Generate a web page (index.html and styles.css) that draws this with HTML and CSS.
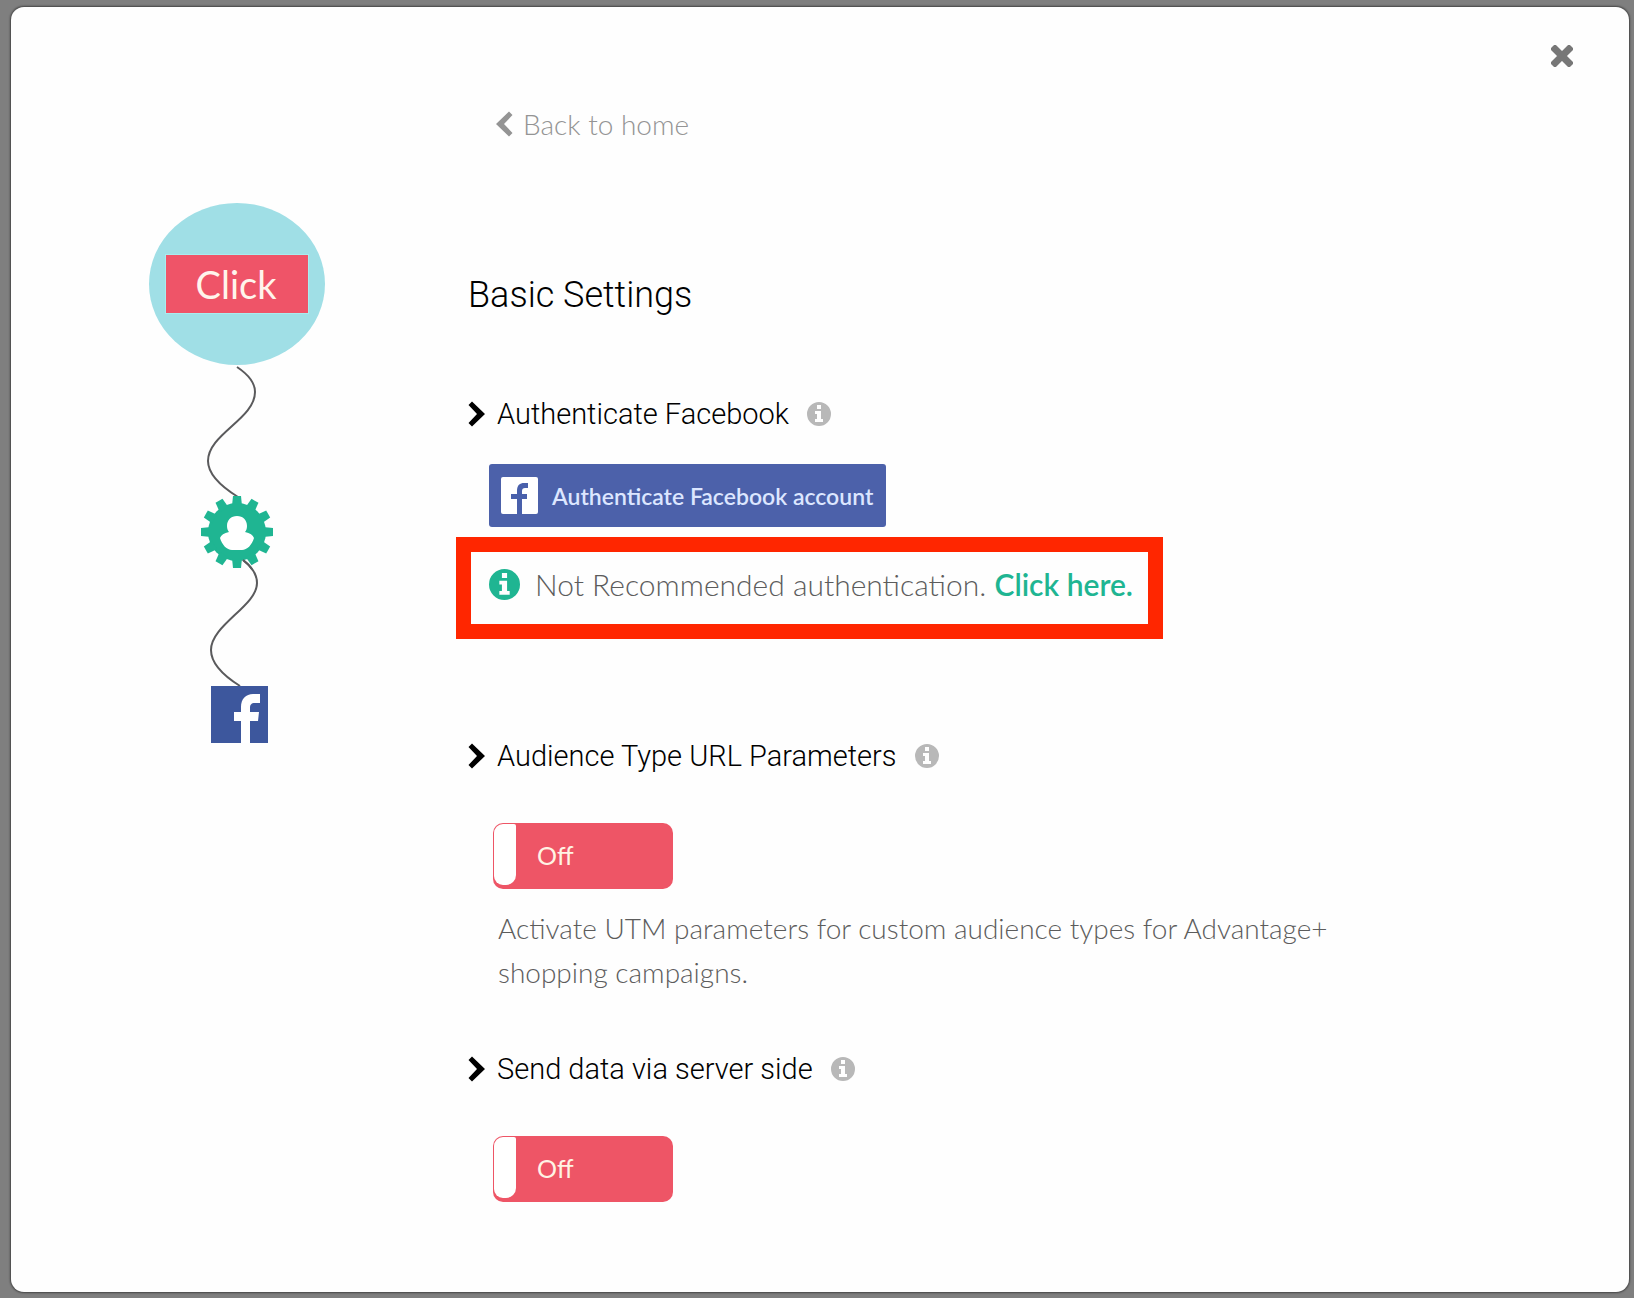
FILE: index.html
```html
<!DOCTYPE html>
<html lang="en">
<head>
<meta charset="utf-8">
<meta name="viewport" content="width=device-width, initial-scale=1">
<title>Basic Settings</title>
<link rel="stylesheet" href="styles.css">
</head>
<body>
<svg class="sprite" aria-hidden="true">
  <symbol id="chevron" viewBox="0 0 17 26"><path d="M4 0.500L0.500 4L9 13L0.500 22L4 25.500L17 13Z"/></symbol>
  <symbol id="info" viewBox="0 0 24 24"><path fill-rule="evenodd" d="M12 0a12 12 0 1 0 0 24a12 12 0 1 0 0-24zM10 3h4v4h-4zM8 9h6v8h2v3H8v-3h2v-5H8z"/></symbol>
</svg>
<main class="modal" role="dialog" aria-labelledby="title">
  <header class="modal-header">
    <button class="close" type="button" aria-label="Close">
      <svg width="22" height="22" viewBox="0 0 22 22"><path d="M4 4L18 18M18 4L4 18" stroke="currentColor" stroke-width="7" stroke-linecap="square" stroke-linejoin="round"/></svg>
    </button>
  </header>
  <div class="modal-body">
    <svg class="flow" width="180" height="545" viewBox="147 203 180 545" role="img" aria-label="Click flow">
      <ellipse cx="237" cy="284" rx="88" ry="81" fill="#a0dfe6"/>
      <rect x="165.500" y="254.500" width="143" height="59" fill="#ef5468" stroke="#a9ecef"/>
      <text class="flow-text" x="236" y="299" text-anchor="middle">Click</text>
      <g fill="none" stroke="#5a5a5c" stroke-width="2">
        <path d="M237 367C249 375 255 383 255 392C255 419 208 434 208 461C208 475 222 487 238 497"/>
        <path d="M243 560C252 567 257 574 257 583C257 606 211 625 211 650C211 664 224 676 240 686"/>
      </g>
      <g transform="translate(237 532)" fill="#1fb592">
        <circle r="29"/>
        <g id="teeth">
          <path id="tooth" d="M-5 -26L-4 -36H4L5 -26Z"/>
          <use href="#tooth" transform="rotate(30)"/><use href="#tooth" transform="rotate(60)"/>
          <use href="#tooth" transform="rotate(90)"/><use href="#tooth" transform="rotate(120)"/>
          <use href="#tooth" transform="rotate(150)"/><use href="#tooth" transform="rotate(180)"/>
          <use href="#tooth" transform="rotate(210)"/><use href="#tooth" transform="rotate(240)"/>
          <use href="#tooth" transform="rotate(270)"/><use href="#tooth" transform="rotate(300)"/>
          <use href="#tooth" transform="rotate(330)"/>
        </g>
        <path fill="#fff" d="M0 -16C6 -16 10 -12 10 -6C10 -3 9 -1 8 0C13 1 16 3 17 6C15 13 10 18 5 18H-5C-10 18 -15 13 -17 6C-16 3 -13 1 -8 0C-9 -1 -10 -3 -10 -6C-10 -12 -6 -16 0 -16Z"/>
      </g>
      <path stroke="#5a5a5c" stroke-width="2" fill="none" d="M243 560C247 563 250 566 252 569"/>
      <rect x="211" y="686" width="57" height="57" fill="#3d579d"/>
      <path fill="#fff" d="M241 743V721H234V712H241V707C241 699 246 694 253 694H260V703H255C251 703 250 705 250 708V712H259L258 721H250V743Z"/>
    </svg>
    <div class="content">
      <a class="back" href="#home">
        <svg class="chevron back-chevron"><use href="#chevron"/></svg>
        <span>Back to home</span>
      </a>
      <h1 class="title" id="title">Basic Settings</h1>

      <section class="section">
        <h2 class="heading">
          <svg class="chevron"><use href="#chevron"/></svg>
          <span>Authenticate Facebook</span>
          <button class="info" type="button" aria-label="About Facebook authentication"><svg class="info-icon"><use href="#info"/></svg></button>
        </h2>
        <button class="facebook" type="button">
          <svg width="37" height="37" viewBox="0 0 37 37"><rect width="37" height="37" rx="2" fill="#fff"/><path fill="#4960ab" d="M16 37V22H10V17H16V14C16 8 19 6 23 6H27V11H24C22 11 21 12 21 14V17H26V22H21V37Z"/></svg>
          <span>Authenticate Facebook account</span>
        </button>
        <p class="note">
          <svg class="note-icon"><use href="#info"/></svg>
          <span>Not Recommended authentication. <a class="note-link" href="#more">Click here.</a></span>
        </p>
      </section>

      <section class="section section-audience">
        <h2 class="heading">
          <svg class="chevron"><use href="#chevron"/></svg>
          <span>Audience Type URL Parameters</span>
          <button class="info" type="button" aria-label="About audience type URL parameters"><svg class="info-icon"><use href="#info"/></svg></button>
        </h2>
        <label class="toggle"><input class="knob" type="checkbox"><span>Off</span></label>
        <p class="description">Activate UTM parameters for custom audience types for Advantage+ shopping campaigns.</p>
      </section>

      <section class="section section-server">
        <h2 class="heading">
          <svg class="chevron"><use href="#chevron"/></svg>
          <span>Send data via server side</span>
          <button class="info" type="button" aria-label="About sending data via server side"><svg class="info-icon"><use href="#info"/></svg></button>
        </h2>
        <label class="toggle"><input class="knob" type="checkbox"><span>Off</span></label>
      </section>
    </div>
  </div>
</main>
</body>
</html>
```
FILE: styles.css
```css
* { box-sizing: border-box; }

body {
  margin: 0;
  min-height: 100vh;
  padding: 7px 5px 6px 11px;
  display: flex;
  background: #7f7f7f;
  font-family: Lato, "Liberation Sans", sans-serif;
  font-weight: 300;
  color: #5c5c5c;
}

h1, h2, p { margin: 0; font-weight: 300; }
button { border: 0; padding: 0; background: none; font: inherit; cursor: pointer; }
svg { flex: none; }

.sprite { position: absolute; width: 0; height: 0; }

.modal {
  flex: 1;
  background: #fefefe;
  border-radius: 13px;
  box-shadow: 0 0 2px 1px #444;
}

.modal-header {
  display: flex;
  justify-content: flex-end;
  padding: 30px 48px 0 0;
}

.close {
  width: 38px;
  height: 38px;
  display: grid;
  place-items: center;
  color: #777;
}

.modal-body {
  display: flex;
  align-items: flex-start;
  gap: 141px;
  padding: 29px 48px 87px 136px;
}

.flow { margin-top: 99px; }
.flow-text { font-size: 38px; font-weight: 400; fill: #fff5ec; }

.content { flex: 1; min-width: 0; }

.chevron { width: 17px; height: 26px; fill: currentColor; }

.back {
  display: flex;
  align-items: center;
  gap: 10px;
  width: max-content;
  margin-left: 28px;
  font-size: 28px;
  line-height: 40px;
  color: #949494;
  text-decoration: none;
}
.back-chevron { transform: rotate(180deg); }

.title {
  margin: 127px 0 75px;
  font-family: Roboto, "Liberation Sans", sans-serif;
  font-size: 36px;
  line-height: 48px;
  color: #000;
}

.heading {
  display: flex;
  align-items: center;
  gap: 12px;
  font-family: Roboto, "Liberation Sans", sans-serif;
  font-size: 29px;
  line-height: 40px;
  color: #000;
}

.info { margin-left: 6px; display: flex; }
.info-icon { width: 24px; height: 24px; fill: #b8b8b8; }

.facebook {
  display: flex;
  align-items: center;
  gap: 14px;
  height: 63px;
  margin: 30px 0 0 21px;
  padding: 0 13px 0 12px;
  border-radius: 3px;
  background: #4c61aa;
  color: #dce6ff;
  font-size: 23px;
  font-weight: 600;
}

.note {
  display: flex;
  align-items: center;
  gap: 15px;
  width: max-content;
  margin: 10px 0 0 -12px;
  padding: 12px 15px 20px 18px;
  border: 15px solid #ff2600;
  font-size: 30px;
  line-height: 40px;
}
.note-icon { width: 31px; height: 31px; fill: #1fb592; }
.note-link { color: #1fb592; font-weight: 600; text-decoration: none; }

.section-audience { margin-top: 97px; }
.section-server { margin-top: 55px; }

.toggle {
  display: flex;
  align-items: flex-start;
  gap: 21px;
  width: 180px;
  height: 66px;
  margin: 47px 0 0 25px;
  padding: 1px;
  border-radius: 10px;
  background: #ee5566;
  color: #fff3e4;
  font-size: 25px;
  font-weight: 400;
  line-height: 62px;
  cursor: pointer;
}
.knob {
  appearance: none;
  width: 22px;
  height: 61px;
  margin: 0;
  border-radius: 9px 2px 10px 9px;
  background: #fff;
}

.description {
  max-width: 860px;
  margin: 17px 0 0 30px;
  font-size: 28px;
  line-height: 44px;
}
```
